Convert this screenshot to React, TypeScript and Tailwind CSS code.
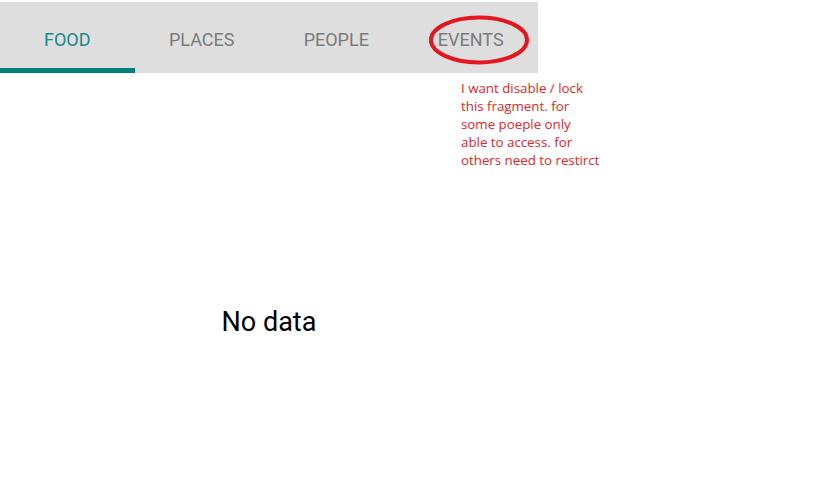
import React from "react";

const tabs = ["FOOD", "PLACES", "PEOPLE", "EVENTS"];

const App = () => {
  const active = 0;

  return (
    <div className="relative w-[819px] h-[485px] bg-white overflow-hidden font-['Roboto',sans-serif]">
      <div className="w-[538px] pt-[2px]">
        <div className="flex h-[71px] bg-[#dedede]">
          {tabs.map((tab, i) => (
            <div key={tab} className="relative flex-1 flex items-center justify-center pt-[4px]">
              <span
                className={
                  "text-[18px] " +
                  (i === active ? "text-[#168a8b]" : "text-[#7b7b7b]")
                }
              >
                {tab}
              </span>
              {i === active && (
                <div className="absolute left-0 right-0 bottom-0 h-[5px] bg-[#03807e]" />
              )}
            </div>
          ))}
        </div>
        <div className="flex justify-center mt-[234px]">
          <p className="text-[27px] leading-[30px] text-black">No data</p>
        </div>
      </div>

      {/* annotation */}
      <svg className="absolute left-[427px] top-[14px]" width="104" height="52" viewBox="0 0 104 52">
        <ellipse cx="52" cy="26" rx="48" ry="22.5" fill="none" stroke="#e3151d" strokeWidth="4" />
      </svg>
      <div className="absolute left-[461px] top-[79px] text-[13.3px] leading-[18px] text-[#e0262a] font-['Open_Sans',sans-serif]">
        <p>I want disable / lock</p>
        <p>this fragment. for</p>
        <p>some poeple only</p>
        <p>able to access. for</p>
        <p>others need to restirct</p>
      </div>
    </div>
  );
};

export default App;
